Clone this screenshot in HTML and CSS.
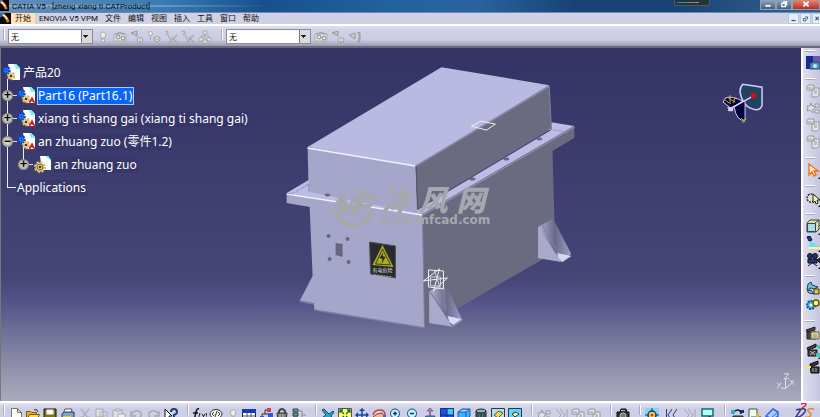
FILE: index.html
```html
<!DOCTYPE html>
<html lang="zh-CN">
<head>
<meta charset="utf-8">
<title>CATIA V5</title>
<link rel="stylesheet" href="styles.css">
</head>
<body>
<svg class="sprite" aria-hidden="true">
<defs>
<symbol id="app" viewBox="0 0 12 12"><path fill="#080810" d="M0 0h12v12H0z"/><path fill="#2f66b0" d="M0 0h6L1 5H0z"/><path d="M3 2q4 2 6 8" stroke="#f07018" stroke-width="3" fill="none"/><path d="M3 2q3 1 5 5" stroke="#fff4d0" stroke-width="1.500" fill="none"/></symbol>
<symbol id="new" viewBox="0 0 14 14"><path fill="#fffff4" stroke="#777" d="M2.500.5h6l4 4v9h-10z"/><path fill="#e8e070" stroke="#777" d="M8.500.5v4h4z"/></symbol>
<symbol id="open" viewBox="0 0 14 14"><path fill="#e8b020" stroke="#7a5a00" d="M.5 3.500h4l1 1h5v8H.500z"/><path fill="#ffd850" stroke="#7a5a00" d="M.5 12.500l3-6h10l-3 6z"/><path d="M8 2q3-2 4 2" stroke="#333" fill="none"/></symbol>
<symbol id="save" viewBox="0 0 14 14"><path fill="#77770c" stroke="#111" d="M1 1h12v12H1z"/><path fill="#f4f4ff" d="M3.500 1.500h7v5h-7z"/><path fill="#111" d="M3.500 9h7v4h-7z"/></symbol>
<symbol id="print" viewBox="0 0 14 14"><path fill="#fff" stroke="#557" d="M4 1h7l-1 5H2z"/><path fill="#7fa4cc" stroke="#334" d="M1 6l2-2h10v6l-2 2H1z"/><path fill="#d8c840" d="M2 8h8v2H2z"/></symbol>
<symbol id="cut" viewBox="0 0 14 14"><g fill="none" stroke="#aaa" stroke-width="1.200"><path d="M3 1l7 9M11 1L4 10"/><circle cx="3" cy="11" r="2"/><circle cx="11" cy="11" r="2"/></g></symbol>
<symbol id="copy" viewBox="0 0 14 14"><path fill="#dedee8" stroke="#aaa" d="M1 1h7v8H1zM5 4h7v9H5z"/><path d="M6.500 7h4M6.500 9h4" stroke="#aaa"/></symbol>
<symbol id="paste" viewBox="0 0 14 14"><path fill="#dcdce4" stroke="#aaa" d="M1 2h9v10H1z"/><path fill="#eee" stroke="#aaa" d="M6 6h7v7H6zM4 1h4v2H4z"/></symbol>
<symbol id="undo" viewBox="0 0 14 14"><path fill="none" stroke="#aaa" stroke-width="1.500" d="M2 3v5h5M2 8q2-6 7-5 4 1 3 5l-3 4"/></symbol>
<symbol id="redo" viewBox="0 0 14 14"><path fill="none" stroke="#aaa" stroke-width="1.500" d="M12 3v5H7M12 8q-2-6-7-5-4 1-3 5l3 4"/></symbol>
<symbol id="help" viewBox="0 0 14 14"><path fill="#fff" stroke="#111" d="M1 1v10l2-2 2 4 1-1-1-4h3z"/><path d="M7 4q0-3 3-3t3 3q0 2-3 3v3M10 11v2" stroke="#1c3e7c" stroke-width="2" fill="none"/></symbol>
<symbol id="fx" viewBox="0 0 14 14"><path d="M6 1q-2-1-3 3L1 13M0 5h5" stroke="#111" stroke-width="1.500" fill="none"/><path d="M7 5q-2 3 0 7M9 6l3 5M12 6l-3 5M13 5q2 3 0 7" stroke="#222" fill="none"/></symbol>
<symbol id="bubble" viewBox="0 0 14 14"><ellipse cx="7" cy="6" rx="6" ry="4.500" fill="#eee" stroke="#333"/><path d="M5 4L3 6l2 2M9 4l2 2-2 2M8 3L6 9M9 10l3 3" stroke="#444" fill="none"/></symbol>
<symbol id="bulb" viewBox="0 0 14 14"><path fill="#eee" stroke="#aaa" d="M5.500 8Q3 2 7 2t2 6zM5.500 9h3v3h-3z"/></symbol>
<symbol id="table" viewBox="0 0 14 14"><path fill="#fff" stroke="#223" d="M.5 1.500h13v12H.500z"/><path fill="#1839b8" d="M0 1h14v4H0z"/><path d="M1 8h12M1 11h12M5 5v9M9 5v9" stroke="#556"/></symbol>
<symbol id="struct" viewBox="0 0 14 14"><path d="M3 10V6h6M6 6V2h4M3 10h7" stroke="#333" fill="none"/><path fill="#e03a50" d="M8 0h4v4H8z"/><path fill="#3558d8" d="M9 5h5v4H9zM1 8h4v4H1z"/><path fill="#68b8ff" d="M9 10h4v3H9z"/></symbol>
<symbol id="lock" viewBox="0 0 14 14"><path d="M4 6V3q3-4 6 0v3" fill="none" stroke="#444" stroke-width="2"/><path fill="#777" stroke="#333" d="M2 5h10l-1 8H3z"/><path d="M5 6v5M8 6v5" stroke="#bbb"/></symbol>
<symbol id="link" viewBox="0 0 14 14"><path fill="#5fa28e" stroke="#344" d="M1 1h5v3H1zM1 5h5v3H1zM1 9h5v4H1z"/><path d="M7 3h3v8H7M10 7h4" stroke="#888" fill="none"/></symbol>
<symbol id="plane" viewBox="0 0 14 14"><path fill="#20a8cc" stroke="#124a70" d="M1 2l2-1 5 5 4-3 1 1-3 4 3 4-2 1-4-3-4 0-1-1 3-2z"/></symbol>
<symbol id="fit" viewBox="0 0 14 14"><path fill="#ffff70" stroke="#555" d="M.5.500h13v13H.500z"/><path d="M2 2l4 4M12 2L8 6M2 12l4-4M12 12L8 8M2 5V2h3M9 2h3v3M2 9v3h3M9 12h3V9" fill="none" stroke="#146a36" stroke-width="1.300"/></symbol>
<symbol id="pan" viewBox="0 0 14 14"><path d="M7 2v10M2 7h10" stroke="#134a98" stroke-width="1.500"/><path fill="#134a98" d="M7 0l3 3H4zM7 14l3-3H4zM0 7l3-3v6zM14 7l-3-3v6z"/></symbol>
<symbol id="rotate" viewBox="0 0 14 14"><path d="M1 7q1-5 7-5 5 0 5 5" fill="none" stroke="#ca4238" stroke-width="1.500"/><path fill="#ecb393" stroke="#804a40" d="M1 9l4-3 5-1 2 3-3 4H4z"/><path d="M9 12q5 0 4-5" stroke="#2868b8" stroke-width="2" fill="none"/></symbol>
<symbol id="zin" viewBox="0 0 14 14"><circle cx="6" cy="5.500" r="4.500" fill="#c4f4ff" stroke="#1c426e"/><path d="M4 5.500h4M6 3.500v4" stroke="#123a70" stroke-width="1.500"/><path d="M9 9l4 4" stroke="#123a70" stroke-width="2"/></symbol>
<symbol id="zout" viewBox="0 0 14 14"><circle cx="6" cy="5.500" r="4.500" fill="#c4f4ff" stroke="#1c426e"/><path d="M4 5.500h4" stroke="#123a70" stroke-width="1.500"/><path d="M9 9l4 4" stroke="#123a70" stroke-width="2"/></symbol>
<symbol id="normal" viewBox="0 0 14 14"><path d="M7 2v6" stroke="#7a52b0" stroke-width="1.500"/><path fill="#e0a040" stroke="#7a52b0" d="M7 0l3 3H4z"/><path fill="#2b98a6" stroke="#37577a" d="M3 8h9l-2 4H0z"/></symbol>
<symbol id="multi" viewBox="0 0 14 14"><path fill="#1e50e0" stroke="#173080" d="M.5.500h13v13H.500z"/><path fill="#38c8ff" d="M7 1h6v6H7z"/><path d="M7 1v12M1 7h12" stroke="#112878"/></symbol>
<symbol id="iso" viewBox="0 0 14 14"><path fill="#39b1ff" stroke="#1958b0" d="M1 4l4-3h8v7l-4 4H1z"/><path fill="#a7e5ff" d="M2 4l3-2h7L9 4z"/><path d="M1 4h8v8M9 4l4-3" fill="none" stroke="#1958b0"/></symbol>
<symbol id="shade" viewBox="0 0 14 14"><path fill="#4c7c7e" stroke="#222" d="M2 3v8q5 4 10 0V3"/><ellipse cx="7" cy="3" rx="5" ry="2" fill="#8bb8b4" stroke="#222"/><path d="M4 5v7M7 5v8M10 5v7" stroke="#223"/></symbol>
<symbol id="hide" viewBox="0 0 14 14"><path fill="#b8dce4" stroke="#334" d="M.5.500h13v13H.500z"/><path fill="#ead640" stroke="#555" d="M3 7l5-4 4 2-5 5zM3 10h6v3H3z"/></symbol>
<symbol id="swap" viewBox="0 0 14 14"><path fill="#5ed6fa" stroke="#334" d="M.5.500h13v13H.500z"/><path fill="#fff8b4" stroke="#333" d="M4 6l4-2 3 2-4 3zM4 10h5v3H4z"/></symbol>
<symbol id="gears" viewBox="0 0 14 14"><g fill="#e2e2ea" stroke="#999"><path d="M1 5h3l1-3 1 3 4 1-3 2v4l-3-3-3 1 1-3z"/><path d="M9 3h4v3H9zM9 9h4v3H9z"/></g></symbol>
<symbol id="skip" viewBox="0 0 14 14"><path d="M2 1l5 6-5 6M6 1l5 6-5 6M13 1v12" fill="none" stroke="#a5a5aa"/></symbol>
<symbol id="cubes" viewBox="0 0 14 14"><path fill="#e4e4eb" stroke="#999" d="M1 2l2-1h5v5H1zM6 6l2-2h5v7l-2 2H6z"/><path d="M2 4h4M8 7h3M8 9h3" stroke="#999"/></symbol>
<symbol id="camera" viewBox="0 0 14 14"><path fill="#333" stroke="#111" d="M1 4h3l1-3h5l1 3h2v9H1z"/><circle cx="7" cy="8" r="3" fill="#777" stroke="#bbb"/><path fill="#bbb" d="M5 2h4v1H5z"/></symbol>
<symbol id="target" viewBox="0 0 14 14"><path fill="#80daf4" d="M0 0h14v14H0z"/><circle cx="7" cy="7" r="4" fill="#f1d23d" stroke="#173b80" stroke-width="1.500"/><circle cx="7" cy="7" r="1.500" fill="#d33"/><path d="M7 0v4M7 10v4M0 7h4M10 7h4" stroke="#173b80"/></symbol>
<symbol id="back" viewBox="0 0 14 14"><path d="M2.500 1v12M8 1L4 7l4 6M13 1L9 7l4 6" fill="none" stroke="#223a76"/></symbol>
<symbol id="screen" viewBox="0 0 14 14"><path fill="#b2fff4" stroke="#196a74" stroke-width="1.500" d="M1 1h11v7H1z"/><path d="M8 8l4 5" stroke="#333" stroke-width="2"/></symbol>
<symbol id="robot" viewBox="0 0 14 14"><path fill="#36a8c8" d="M1 2h4v4H1z"/><path d="M5 3q5-3 6 3" stroke="#222" stroke-width="1.500" fill="none"/><path fill="#555" stroke="#222" d="M3 8h10v5H3z"/><path fill="#152f76" d="M10 2h4v3h-4z"/></symbol>
<symbol id="sheet" viewBox="0 0 14 14"><path fill="#effff4" stroke="#355" d="M1 1h8v9H1z"/><path fill="#62b9a0" stroke="#355" d="M3 9h10v4H5z"/><path fill="#d8b840" d="M8 5h3v5H8z"/></symbol>
<symbol id="eraser" viewBox="0 0 14 14"><path fill="#aacdff" stroke="#3365d7" stroke-width="1.500" d="M1 8l7-7 5 3v4l-7 5-5-2z"/><path d="M1 8l5 2 7-6M6 10v3" stroke="#3365d7" fill="none"/></symbol>
<symbol id="eyes" viewBox="0 0 14 14"><path fill="#e7e7eb" stroke="#aaa" d="M1 4h12v7H1z"/><circle cx="5" cy="7" r="2" fill="none" stroke="#888"/><circle cx="10" cy="8" r="2" fill="none" stroke="#888"/><path d="M2 4q5-3 10 0" stroke="#999" fill="none"/></symbol>
<symbol id="cone" viewBox="0 0 14 14"><path fill="#c6c6ca" stroke="#999" d="M1 3l6-2v5z"/><ellipse cx="10" cy="10" rx="3" ry="2.500" fill="#e6e6ea" stroke="#999"/><path d="M10 9v3" stroke="#999"/></symbol>
<symbol id="pins" viewBox="0 0 14 14"><circle cx="3.500" cy="3.500" r="2" fill="#eee" stroke="#aaa"/><path d="M3.500 6v4" stroke="#aaa"/><ellipse cx="10" cy="9" rx="3" ry="2.500" fill="#eee" stroke="#999"/><path d="M8 9h4" stroke="#999"/></symbol>
<symbol id="cross" viewBox="0 0 14 14"><path fill="none" stroke="#aaa" stroke-width="1.300" d="M1 2q3-2 3 1L2 5M4 5l4 7M13 5l-8 8M8 7l5 6"/></symbol>
<symbol id="tree" viewBox="0 0 14 14"><path fill="#e8e8ef" stroke="#aaa" d="M5 1h4v3H5zM1 8h4v3H1zM9 8h4v3H9zM5 10h4v3H5z"/><path d="M7 4v6M3 8V6h8v2" stroke="#aaa" fill="none"/></symbol>
<symbol id="sflag" viewBox="0 0 14 14"><path fill="#ccc" stroke="#999" d="M1 5l6-2v6z"/><path fill="none" stroke="#999" d="M9 3l2-1 1 1v8l-1 1-2-1M11 2v10"/></symbol>
<symbol id="product" viewBox="0 0 14 14"><path fill="#182896" d="M0 0h7v13H0z"/><path fill="#665cae" d="M7 0h7v8H7z"/><path fill="#4f94b8" stroke="#264b68" d="M4 7h2l1-1h4l1 1h2v6H4z"/><circle cx="9" cy="10" r="2" fill="#bcecff"/></symbol>
<symbol id="arrow" viewBox="0 0 14 14"><path fill="#fff1e4" stroke="#f27218" stroke-width="1.400" d="M3 1v11l3-3 2 4 2-1-2-4h4z"/></symbol>
<symbol id="gearpick" viewBox="0 0 14 14"><circle cx="5" cy="7" r="4" fill="#ddd" stroke="#333" stroke-dasharray="2 1" stroke-width="1.500"/><path fill="#fff4a0" stroke="#222" d="M7 3v9l2-2 1 3 2-1-1-3h3z"/></symbol>
<symbol id="box" viewBox="0 0 14 14"><path fill="#e8df8f" stroke="#334450" d="M1 4l3-3h9v9l-3 3H1z"/><path fill="#a8dce8" stroke="#334450" d="M1.500 4.500h8v8h-8z"/><path d="M9 4l4-3" stroke="#334450"/></symbol>
<symbol id="spot" viewBox="0 0 14 14"><path fill="#74dcfa" d="M4 4l10 7H3z"/><path fill="#fff48a" d="M2 11h12v2H2z"/><path fill="#2239a6" stroke="#112" d="M1 1l3-1 2 4-3 1z"/></symbol>
<symbol id="movie" viewBox="0 0 14 14"><g fill="#26327a" stroke="#111"><circle cx="4" cy="3" r="2.500"/><circle cx="9" cy="3" r="2.500"/><path d="M2 6h9v4H2zM11 7l3-2v5z"/></g><path d="M6 10l-4 3M7 10l4 3" stroke="#111"/></symbol>
<symbol id="craft" viewBox="0 0 14 14"><path fill="#76bdd4" stroke="#23414c" d="M2 3l3-2 1 3 6 2-4 2-3-1-4 2zM1 10l4-1 3 4-5-1z"/><path fill="#e3cc21" stroke="#333" d="M8 8h5v5H8z"/></symbol>
<symbol id="cogs" viewBox="0 0 14 14"><circle cx="5" cy="7" r="4" fill="#38b8d8" stroke="#17518e" stroke-width="2" stroke-dasharray="2 1"/><circle cx="10" cy="5" r="3" fill="#fff37a" stroke="#675a0a" stroke-width="1.500"/><circle cx="5" cy="7" r="1.500" fill="#fff"/></symbol>
<symbol id="clap" viewBox="0 0 14 14"><path fill="#444" stroke="#222" d="M0 4l9-3v3L1 6zM1 6h9v7H1z"/><path fill="#e2d88a" stroke="#665" d="M5 6h8v7H5z"/><path d="M7 9h4M7 11h4" stroke="#887"/></symbol>
<symbol id="clap2" viewBox="0 0 14 14"><path fill="#444" stroke="#111" d="M1 5l9-4v3L2 7zM2 7h9v6H2z"/><path d="M4 8l5 4M9 8l-5 4" stroke="#bbb"/><path fill="#48c8b4" d="M11 2h3v4h-3zM10 10h4v4h-4z"/></symbol>
<symbol id="clap3" viewBox="0 0 14 14"><path fill="#333" stroke="#111" d="M4 4l8-3v3L5 7h8v6H5z"/><path fill="#ffe65a" d="M0 6h5v2H0z"/><path d="M7 8v4M10 8v4" stroke="#aaa"/></symbol>
<symbol id="part" viewBox="0 0 19 18"><path fill="#fff" d="M6 0h8l4 4v12H9z"/><path fill="#70f6f4" d="M12 0h2l4 4v1h-4z"/><circle cx="4.500" cy="6.500" r="3" fill="#2e9bff" stroke="#0641d9" stroke-width="2.500" stroke-dasharray="2 1"/><circle cx="4.500" cy="6.500" r="1" fill="#103078"/><circle cx="9" cy="12" r="3" fill="#ffe58a" stroke="#d8b860" stroke-width="2.500" stroke-dasharray="2 1"/><circle cx="9" cy="12" r="1.300" fill="#27386e"/></symbol>
<symbol id="partred" viewBox="0 0 19 18"><use href="#part" width="19" height="18"/><path d="M12 17l3-6 3 6M12 15q3-3 6 1" stroke="#d31a25" stroke-width="1.500" fill="none"/></symbol>
<symbol id="gearpart" viewBox="0 0 19 18"><path fill="#fff" d="M7 0h8l3 4v10H9z"/><path fill="#70f6f4" d="M12 0h3l3 4v1z"/><circle cx="7" cy="11" r="4.500" fill="#ffe58a" stroke="#e0c468" stroke-width="3" stroke-dasharray="2 1.500"/><circle cx="7" cy="11" r="3" fill="#ffe58a" stroke="#705d2c"/><circle cx="7" cy="11" r="1.500" fill="#344074"/></symbol>
</defs>
</svg>
<div class="window">
<header class="titlebar">
<svg class="app-icon"><use href="#app"/></svg>
<h1>CATIA V5 - [zheng xiang ti.CATProduct]</h1>
<div class="meter"><span></span></div>
<div class="window-buttons">
<button aria-label="Minimize"><svg viewBox="0 0 16 10"><path d="M5 6.500h6" stroke="#fff" stroke-width="2"/></svg></button>
<button aria-label="Restore"><svg viewBox="0 0 16 10"><path d="M5.500 3.500h4v4h-4zM7 2h4v4" fill="none" stroke="#fff" stroke-width="1.500"/></svg></button>
<button class="close" aria-label="Close"><svg viewBox="0 0 16 10"><path d="M5 2l6 5M11 2L5 7" stroke="#fff" stroke-width="2"/></svg></button>
</div>
</header>
<nav class="menubar">
<svg class="app-icon"><use href="#app"/></svg>
<button class="active">开始</button><button>ENOVIA V5 VPM</button><button>文件</button><button>编辑</button><button>视图</button><button>插入</button><button>工具</button><button>窗口</button><button>帮助</button>
<div class="document-buttons">
<button aria-label="Minimize document"><svg viewBox="0 0 11 10"><path d="M3 7.500h5" stroke="#456" stroke-width="1.500"/></svg></button>
<button aria-label="Restore document"><svg viewBox="0 0 11 10"><path d="M3 5h3v3H3zM5 3h3v3" fill="none" stroke="#456"/></svg></button>
<button aria-label="Close document"><svg viewBox="0 0 11 10"><path d="M3 3l4 4M7 3L3 7" stroke="#456" stroke-width="1.500"/></svg></button>
</div>
</nav>
<div class="toolbar">
<div class="tool-set">
<select aria-label="Filter"><option>无</option></select>
<button aria-label="Hint"><svg><use href="#bulb"/></svg></button><button aria-label="View"><svg><use href="#eyes"/></svg></button><button aria-label="Cone"><svg><use href="#cone"/></svg></button><button aria-label="Pins"><svg><use href="#pins"/></svg></button><button aria-label="Cross"><svg><use href="#cross"/></svg></button><button aria-label="Cross set"><svg><use href="#cross"/></svg></button><button aria-label="Structure"><svg><use href="#tree"/></svg></button>
</div>
<div class="tool-set">
<select aria-label="Scene"><option>无</option></select>
<button aria-label="View scene"><svg><use href="#eyes"/></svg></button><button aria-label="Scene cone"><svg><use href="#cone"/></svg></button><button aria-label="Scene flag"><svg><use href="#sflag"/></svg></button>
</div>
</div>
<div class="workspace">
<main class="viewport">
<svg class="scene" viewBox="0 48 801 353" role="img" aria-label="3D model">
<defs><linearGradient id="rib"><stop offset="0" stop-color="#b2b2dc"/><stop offset=".5" stop-color="#686888"/><stop offset="1" stop-color="#a0a0c4"/></linearGradient></defs>
<path fill="#6a6a80" d="M422 217L552 144l3 108-97 56-34 20z"/>
<path fill="#a6a6ca" d="M286 194l22 0 114 20 2 114-110-18-1-7-14-2 13-25-3-69-23-4z"/>
<path fill="#bcbce4" d="M286 193l22-13 109 30 134-80v-8l23 4-152 88z"/>
<path fill="#6a6a80" d="M574 126v12l-22 13-130 75v-12z"/>
<path fill="#a6a6ca" d="M307 147l108 18 2 44v4l-109-21z"/>
<path fill="#6a6a80" d="M415 165L549 86l2 43-134 80z"/>
<path fill="#b9b9e2" d="M441 67l108 18-134 81-108-19z"/>
<path d="M307 148l108 18M286 194l136 21" stroke="#f2f2ff" stroke-width="1.500"/>
<path d="M416 166l1 43" stroke="#52526c"/><path d="M422 215l2 113M549 86l2 43" stroke="#80809c"/>
<path d="M415 166l134-80M422 215l152-88" stroke="#8c8cab" stroke-width="1.500"/>
<path d="M424 215l1 112" stroke="#68687e" stroke-dasharray="5 3"/>
<path d="M299 301l14 3M314 310l110 18" stroke="#7e7ea2" stroke-width="1.500"/>
<path d="M291 194l17-10v7M548 129l20 3" fill="none" stroke="#9292b7" stroke-dasharray="4 1"/>
<g fill="#666681"><ellipse cx="327" cy="195" rx="3" ry="1.500"/><ellipse cx="472" cy="179" rx="3" ry="1.500"/><ellipse cx="506" cy="159" rx="3" ry="1.500"/><ellipse cx="539" cy="139" rx="3" ry="1.500"/><circle cx="328" cy="236" r="2"/><circle cx="347" cy="239" r="2"/><circle cx="329" cy="259" r="2"/><circle cx="348" cy="262" r="2"/><path d="M335 243l7 1v13l-7-2z"/></g>
<path fill="url(#rib)" d="M538 227l14-8 3 4 16 31-9 8-24-4z"/>
<path fill="#a9a9cd" d="M538 227l23 35-23-4z"/><path d="M538 227l3-3 21 35" fill="none" stroke="#7f7f9c"/><path fill="#d6d6f2" d="M557 253l14 3-9 6-4-4z"/>
<path fill="url(#rib)" d="M429 291l16-7 17 36-9 7-24-4z"/>
<path fill="#a9a9cd" d="M429 291l23 36-23-4z"/><path d="M429 291l23 35" stroke="#74748e"/><path fill="#dadafa" d="M447 316l14 3-8 6-4-3z"/>
<path fill="#7b7b98" d="M441 287l4 1 1 26-3-6z"/>
<path d="M471 126l10-5 14 3-9 6z" fill="none" stroke="#eee"/>
<g stroke="#f2f2f2" fill="none"><path d="M428 270l15 1v18l-15-2zM439 269l-16 12 24-3-14 13z"/><path d="M430 277h10v9h-10zM434 271l6 18" stroke="#d4d4de"/></g>
<path fill="#282c31" stroke="#4f5156" d="M369 242l26 4v32l-25-4z"/>
<path fill="#acac24" d="M382 245l11 22-21-2z"/><path fill="none" stroke="#3a3e24" d="M382 249l8 16-15-1z"/><path fill="#2b2d1e" d="M383 252l-4 6 3 1-1 5 4-7-3-1z"/>
<text class="warning" x="372" y="272">有电危险</text><path d="M374 275l18 2" stroke="#aaa" stroke-dasharray="2 1"/>
<g class="watermark">
<path fill="none" stroke="#a7a8ad" stroke-width="1.500" d="M339 195q12-9 25-4"/>
<path d="M330 215q6-19 13-20l5 9q7-10 12-10h19l-4 6h-11l-2 4h11l-4 5h-10l-4 7h-6l5-13-9 11h-5l-3-11-5 12z"/>
<path fill="none" stroke="#a7a8ad" stroke-width="5" d="M336 213q7 14 20 12 13-2 16-15"/>
<path d="M363 188l1 3 3 1-4 1-1 3-1-4-3-1 4-1z"/>
<text class="brand" y="211"><tspan x="381">沐</tspan><tspan x="418">风</tspan><tspan x="456">网</tspan></text>
<text class="site" x="379" y="224">www.mfcad.com</text>
</g>
<g class="compass"><path fill="#204460" stroke="#d9c9fa" stroke-width="1.500" d="M743 101q-6-12 0-17l19 3v18q-2 6-9 4-7-2-10-8z"/><path fill="#02023d" stroke="#d9c9fa" d="M743 101l2 1v18q-8 2-11-13zM743 101q-12-6-18-3l-2 4 8 6z"/><path d="M731 108l13-7 9-5" stroke="#dfcff8" stroke-width="1.500"/><path fill="#d90d15" d="M751 93h5v5h-5z"/><path fill="none" stroke="#c5b72e" d="M724 99l5 4M727 97l8 5M730 95v9M735 97l-2 6M727 107l4 4 3-4M741 118l4 4M746 118l-4 5"/><path fill="#d9c9fa" d="M728 107h5v4h-5z"/></g>
<g fill="none" stroke="#dedeee"><path d="M785.500 379v10l-5-1M786 388l4-3M784 374h5l-5 5h5M790 380l4 5M794 380l-4 5M777 383l3 3M781 383l-4 6"/></g>
</svg>
<ul class="spec-tree">
<li class="root"><svg><use href="#part"/></svg><span>产品20</span></li>
<li><button class="toggle" aria-label="Expand">+</button><svg><use href="#partred"/></svg><span class="selected">Part16 (Part16.1)</span></li>
<li><button class="toggle" aria-label="Expand">+</button><svg><use href="#partred"/></svg><span>xiang ti shang gai (xiang ti shang gai)</span></li>
<li><button class="toggle" aria-label="Collapse">−</button><svg><use href="#partred"/></svg><span>an zhuang zuo (零件1.2)</span></li>
<li class="child"><button class="toggle" aria-label="Expand">+</button><svg><use href="#gearpart"/></svg><span>an zhuang zuo</span></li>
<li class="applications"><span>Applications</span></li>
</ul>
</main>
<aside class="sidebar">
<div><button aria-label="Product"><svg><use href="#product"/></svg></button></div>
<div><button aria-label="Component"><svg><use href="#cubes"/></svg></button><button aria-label="Replace"><svg><use href="#gears"/></svg></button><button aria-label="Reorder"><svg><use href="#cubes"/></svg></button><button aria-label="Numbering"><svg><use href="#cubes"/></svg></button></div>
<div><button class="more" aria-label="Select"><svg><use href="#arrow"/></svg></button></div>
<div><button class="more" aria-label="Pick gear"><svg><use href="#gearpick"/></svg></button></div>
<div><button class="more" aria-label="Box"><svg><use href="#box"/></svg></button><button class="more" aria-label="Light"><svg><use href="#spot"/></svg></button><button class="more" aria-label="Movie"><svg><use href="#movie"/></svg></button></div>
<div><button aria-label="Fly"><svg><use href="#craft"/></svg></button><button aria-label="Simulate"><svg><use href="#cogs"/></svg></button></div>
<div><button aria-label="Track"><svg><use href="#clap"/></svg></button><button class="more" aria-label="Sequence"><svg><use href="#clap2"/></svg></button><button aria-label="Clip"><svg><use href="#clap3"/></svg></button></div>
</aside>
</div>
<footer class="bottombar">
<div><button aria-label="New"><svg><use href="#new"/></svg></button><button aria-label="Open"><svg><use href="#open"/></svg></button><button aria-label="Save"><svg><use href="#save"/></svg></button><button aria-label="Print"><svg><use href="#print"/></svg></button><button aria-label="Cut"><svg><use href="#cut"/></svg></button><button aria-label="Copy"><svg><use href="#copy"/></svg></button><button aria-label="Paste"><svg><use href="#paste"/></svg></button><button aria-label="Undo"><svg><use href="#undo"/></svg></button><button aria-label="Redo"><svg><use href="#redo"/></svg></button><button aria-label="Help"><svg><use href="#help"/></svg></button></div>
<div><button aria-label="Formula"><svg><use href="#fx"/></svg></button><button aria-label="Comment"><svg><use href="#bubble"/></svg></button><button aria-label="Advice"><svg><use href="#bulb"/></svg></button><button aria-label="Table"><svg><use href="#table"/></svg></button><button aria-label="Relations"><svg><use href="#struct"/></svg></button><button aria-label="Lock"><svg><use href="#lock"/></svg></button><button aria-label="Equivalent"><svg><use href="#link"/></svg></button></div>
<div><button aria-label="Fly mode"><svg><use href="#plane"/></svg></button><button aria-label="Fit all"><svg><use href="#fit"/></svg></button><button aria-label="Pan"><svg><use href="#pan"/></svg></button><button aria-label="Rotate"><svg><use href="#rotate"/></svg></button><button aria-label="Zoom in"><svg><use href="#zin"/></svg></button><button aria-label="Zoom out"><svg><use href="#zout"/></svg></button><button aria-label="Normal view"><svg><use href="#normal"/></svg></button><button aria-label="Multi view"><svg><use href="#multi"/></svg></button><button aria-label="Isometric"><svg><use href="#iso"/></svg></button><button aria-label="Shading"><svg><use href="#shade"/></svg></button><button aria-label="Hide"><svg><use href="#hide"/></svg></button><button aria-label="Swap space"><svg><use href="#swap"/></svg></button></div>
<div><button aria-label="Update"><svg><use href="#gears"/></svg></button><button aria-label="Forward"><svg><use href="#skip"/></svg></button><button aria-label="Cubes"><svg><use href="#cubes"/></svg></button><button aria-label="Cube set"><svg><use href="#cubes"/></svg></button></div>
<div><button aria-label="Capture"><svg><use href="#camera"/></svg></button></div>
<div><button aria-label="Target"><svg><use href="#target"/></svg></button><button aria-label="Previous"><svg><use href="#back"/></svg></button><button aria-label="Next"><svg><use href="#skip"/></svg></button><button aria-label="Magnifier"><svg><use href="#screen"/></svg></button></div>
<div><button aria-label="Manipulate"><svg><use href="#robot"/></svg></button><button aria-label="Sheet"><svg><use href="#sheet"/></svg></button><button aria-label="Erase"><svg><use href="#eraser"/></svg></button></div>
<svg class="ds-logo" viewBox="0 0 32 16" role="img" aria-label="DS"><path d="M13 1q7-2 4 2l-3 2" stroke="#e02830" stroke-width="1.500" fill="none"/><path d="M8 14l5-8q7-1 3 4-4 5-9 4M12 6l-4 1" stroke="#3b3a80" stroke-width="1.500" fill="none"/><path d="M26 6q-7-1-6 2l3 3q0 4-6 3" stroke="#e48b24" stroke-width="1.500" fill="none"/></svg>
</footer>
</div>
</body>
</html>
```
FILE: styles.css
```css
* { box-sizing: border-box; }
body { margin: 0; font-family: "Noto Sans", "Noto Sans CJK SC", sans-serif; font-size: 8px; color: #111; overflow: hidden; }
button { padding: 0; border: 0; background: none; font: inherit; color: inherit; }
svg { display: block; }
.sprite { position: absolute; width: 0; height: 0; }
.window { display: flex; flex-direction: column; height: 100vh; background: #d0d0e8; }
.app-icon { width: 11px; height: 11px; flex: none; }

.titlebar { display: flex; height: 13px; background: radial-gradient(ellipse at 8% 50%, #b5cce0cc, transparent 20%), linear-gradient(90deg, #6690b7, #397bb2 20%, #17508e 32%, #22629e 48%, #2a639f 58%, #174374 70%, #174374 82%, #34638f); border-bottom: 1px solid #708bb0; }
.titlebar .app-icon { margin-left: -2px; }
.titlebar h1 { flex: 1; margin: 0 0 0 3px; font: 400 8px/13px Roboto, sans-serif; color: #050a14; white-space: nowrap; }
.meter { width: 36px; height: 6px; padding: 2px; margin-right: 50px; background: #28323c; border: 1px solid #505864; border-top: 0; border-radius: 0 0 3px 3px; }
.meter span { display: block; width: 22px; height: 1px; background: linear-gradient(90deg, #168dc2, #94a43b); }
.window-buttons { display: flex; height: 10px; }
.window-buttons button { width: 16px; height: 10px; border: 1px solid #8da4b8; border-top: 0; background: linear-gradient(#91a8bd, #425f7c); }
.window-buttons svg { width: 14px; height: 9px; margin: auto; }
.window-buttons .close { width: 28px; background: linear-gradient(#dd8b7e, #bd2b1e); }

.menubar { display: flex; height: 11px; line-height: 11px; background: #d0d0e6; font-family: Roboto, "Noto Sans CJK SC", sans-serif; }
.menubar > button { padding: 0 3px 0 4px; white-space: nowrap; }
.menubar > .active { padding-right: 4px; background: #fde3bb; }
.document-buttons { display: flex; margin-left: auto; margin-right: -3px; }
.document-buttons button { width: 11px; height: 11px; margin-left: 1px; background: #e1effc; border: 1px solid #b5c8de; }
.document-buttons svg { width: 9px; height: 9px; }

.toolbar { display: flex; height: 24px; padding: 3px 0 0 3px; border-top: 2px solid #fff; border-bottom: 2px solid #68687c; background: linear-gradient(#dedeee, #d0d0e6 5px, #cbcbe2 14px, #9999b0); }
.tool-set { display: flex; gap: 3px; height: 15px; }
.tool-set + .tool-set { margin-left: 9px; }
.tool-set::before { content: ""; width: 1px; height: 11px; background: #fff; border-left: 1px solid #aaaabd; box-sizing: content-box; }
.tool-set select { width: 85px; height: 15px; padding: 0 2px; border: 1px solid #8b8b99; border-radius: 0; color: #111; font: 8px "Noto Sans CJK SC", sans-serif; appearance: none; background: linear-gradient(#222, #222) right 4px top 5px / 5px 1px no-repeat, linear-gradient(#222, #222) right 5px top 6px / 3px 1px no-repeat, linear-gradient(#222, #222) right 6px top 7px / 1px 1px no-repeat, linear-gradient(90deg, #777 1px, #dad9dc 1px) right / 11px 100% no-repeat, #fff; }
.tool-set svg, .sidebar svg, .bottombar button svg { width: 14px; height: 14px; }

.workspace { display: flex; flex: 1; min-height: 0; }
.viewport { position: relative; flex: 1; min-width: 0; border-left: 1px solid #777; background: linear-gradient(#333366, #3e3e70 40%, #454578 65%, #56568a 73%, #75759b 82%, #9797b0 93%, #aaaabe); }
.scene { width: 100%; height: 100%; }
.warning { font-size: 5px; fill: #ddd; }
.watermark { fill: #a7a8ad; }
.brand { font: italic 900 29px "Noto Sans CJK SC", sans-serif; }
.site { font: bold 12px "DejaVu Sans", sans-serif; }

.spec-tree { position: absolute; top: 13px; left: 0; margin: 0; padding: 0; list-style: none; font-size: 12px; line-height: 16px; color: #fff; }
.spec-tree::before { content: ""; position: absolute; left: 6px; top: 18px; bottom: 11px; width: 1px; background: #eee; }
.spec-tree li { position: relative; display: flex; align-items: center; height: 23px; padding-left: 1px; }
.spec-tree svg { width: 19px; height: 18px; margin-right: 2px; }
.spec-tree span { padding-right: 1px; white-space: nowrap; background: #33336688; }
.spec-tree .selected { background: #0866f5; outline: 1px solid #a6c7ff; }
.toggle { position: relative; width: 11px; height: 11px; margin-right: 4px; border-radius: 50%; background: radial-gradient(circle, #d0d0c4 35%, #56565a); color: #000; font: bold 12px/11px "Liberation Sans", sans-serif; }
.toggle::after { content: ""; position: absolute; left: 11px; top: 5px; width: 4px; height: 1px; background: #ddd; }
.spec-tree .child { padding-left: 17px; }
.child::before { content: ""; position: absolute; left: 22px; top: -6px; width: 1px; height: 12px; background: #eee; }
.spec-tree .applications { padding-left: 16px; }
.applications::before { content: ""; position: absolute; left: 6px; top: 11px; width: 9px; height: 1px; background: #eee; }

.sidebar { width: 19px; padding: 2px 0 0 2px; border-left: 2px solid #fff; background: linear-gradient(90deg, #dedeef, #c5c5df); overflow: hidden; }
.sidebar div { display: flex; flex-direction: column; gap: 3px; padding: 5px 0 8px 1px; position: relative; border-top: 1px solid transparent; }
.sidebar div::before { content: ""; position: absolute; left: 0; top: -1px; width: 10px; height: 1px; background: #fff; border-bottom: 1px solid #aaaabd; box-sizing: content-box; }
.sidebar button { position: relative; width: 14px; height: 14px; }
.sidebar .more::after { content: ""; position: absolute; right: 0; bottom: -2px; border: 1px solid #111; border-top-color: transparent; border-left-color: transparent; }

.bottombar { display: grid; grid-template-columns: 184fr 128fr 217fr 79fr 28fr 85fr 64fr 32fr; height: 16px; padding-left: 3px; border-top: 2px solid #fff; background: linear-gradient(#e2e2f2, #cecee6 6px); overflow: hidden; }
.bottombar div { position: relative; display: flex; justify-content: space-between; padding: 5px 9px 0 6px; }
.bottombar div::before { content: ""; position: absolute; left: 0; top: 2px; width: 1px; height: 10px; background: #fff; border-left: 1px solid #aaaabd; box-sizing: content-box; }
.bottombar button { width: 14px; height: 14px; }
.ds-logo { width: 32px; height: 16px; }
```
